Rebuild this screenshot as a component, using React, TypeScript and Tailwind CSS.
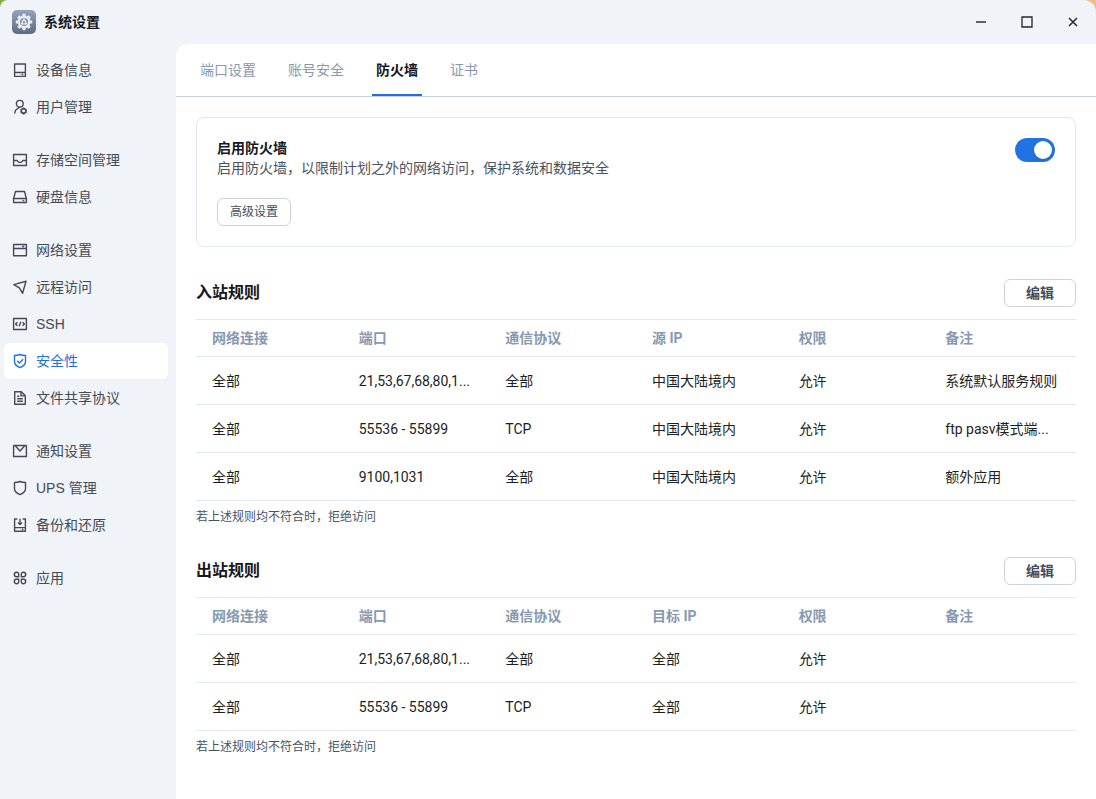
import {useState} from "react";
import type {ReactNode} from "react";
import clsx from "clsx";

type NavItem = {
  label: string;
  icon: ReactNode;
};

type Rule = string[];

const shield =
  "M8 1.5c2 .8 3.8 1 5.500 1v6.300c0 2.900-2.500 4.600-5.500 5.800-3-1.200-5.500-2.900-5.500-5.800V2.500c1.700 0 3.500-.2 5.500-1z";

const navGroups: NavItem[][] = [
  [
    {
      label: "设备信息",
      icon: (
        <>
          <path d="M2.6 2h10.8v12.4H2.6zM2.6 10.5h10.8" />
          <path d="M9.6 12.5h1.6" />
        </>
      ),
    },
    {
      label: "用户管理",
      icon: (
        <>
          <circle cx="7.8" cy="4.8" r="3.4" />
          <path d="M2.8 14.6c0-3 1.6-5 4.4-5.800" />
          <path d="M11.600 9.400l2.300 1.300v2.600l-2.300 1.300-2.300-1.300v-2.600z" strokeWidth="1.8" />
        </>
      ),
    },
  ],
  [
    {
      label: "存储空间管理",
      icon: <path d="M1.6 2.500h12.800v11H1.6zM1.6 8.500h3.600c.4 1.300 1.400 2 2.800 2s2.400-.7 2.800-2h3.600" />,
    },
    {
      label: "硬盘信息",
      icon: (
        <>
          <path d="M3.5 2.500h9l1.900 7v4H1.600v-4zM1.600 9.500h12.800" />
          <path d="M10.600 11.600h1.600" />
        </>
      ),
    },
  ],
  [
    {
      label: "网络设置",
      icon: <path d="M1.6 2.500h12.800v11.200H1.600zM1.600 6.500h12.800M10.200 4.500h2" />,
    },
    {label: "远程访问", icon: <path d="M1.8 5.600L14 2.300l-3.400 12-3.200-5.500z" />},
    {
      label: "SSH",
      icon: (
        <>
          <path d="M1.6 2.500h12.800v11H1.600z" />
          <path d="M5.400 6.200L3.600 8l1.800 1.800M10.600 6.200L12.400 8l-1.800 1.800M8.800 5.700l-1.600 4.600" />
        </>
      ),
    },
    {
      label: "安全性",
      icon: (
        <>
          <path d={shield} />
          <path d="M5.200 7.700l2.200 2.200 3.700-3.700" />
        </>
      ),
    },
    {
      label: "文件共享协议",
      icon: (
        <>
          <path d="M2.700 1.700h6.600l4 4v8.600H2.700z" />
          <path d="M9 1.900v4h4.100M5.200 6.200h2M5.200 8.700h5.600M5.200 11.300h5.600" />
        </>
      ),
    },
  ],
  [
    {label: "通知设置", icon: <path d="M1.600 2.500h12.800v11H1.600zM3.500 3l4.500 5 4.500-5" />},
    {label: "UPS 管理", icon: <path d={shield} />},
    {
      label: "备份和还原",
      icon: (
        <>
          <path d="M5.300 2H2.600v12.300h10.800V2h-2.700M2.600 10.600h10.800" />
          <path d="M8 1.800v5.600M5.900 5.600L8 7.600l2.100-2M9.800 12.500h1.600" />
        </>
      ),
    },
  ],
  [
    {
      label: "应用",
      icon: (
        <>
          <path d="M6.700 6.700H4.300a2.200 2.200 0 1 1 2.400-2.400z" />
          <path d="M9.300 6.700h2.400a2.200 2.200 0 1 0-2.400-2.400z" />
          <path d="M6.700 9.300H4.300a2.200 2.200 0 1 0 2.400 2.400z" />
          <path d="M9.300 9.300h2.400a2.200 2.200 0 1 1-2.400 2.400z" />
        </>
      ),
    },
  ],
];

const tabs = ["端口设置", "账号安全", "防火墙", "证书"];

const inboundRules: Rule[] = [
  ["全部", "21,53,67,68,80,1...", "全部", "中国大陆境内", "允许", "系统默认服务规则"],
  ["全部", "55536 - 55899", "TCP", "中国大陆境内", "允许", "ftp pasv模式端..."],
  ["全部", "9100,1031", "全部", "中国大陆境内", "允许", "额外应用"],
];

const outboundRules: Rule[] = [
  ["全部", "21,53,67,68,80,1...", "全部", "全部", "允许", ""],
  ["全部", "55536 - 55899", "TCP", "全部", "允许", ""],
];

const gearTeeth = [0, 45, 90, 135, 180, 225, 270, 315];

function AppLogo() {
  return (
    <svg viewBox="0 0 24 24" className="size-6" aria-hidden="true">
      <defs>
        <linearGradient id="logo-bg" x1="0" y1="0" x2="0" y2="1">
          <stop offset="0" stopColor="#93a5bd" />
          <stop offset="1" stopColor="#5f6b7d" />
        </linearGradient>
      </defs>
      <rect width="24" height="24" rx="5" fill="url(#logo-bg)" />
      <g fill="#e9edf2">
        {gearTeeth.map((angle) => (
          <rect key={angle} x="10.4" y="3.8" width="3.2" height="4" rx=".6" transform={`rotate(${angle} 12 12)`} />
        ))}
      </g>
      <circle cx="12" cy="12" r="5.2" fill="#8795a9" stroke="#e9edf2" strokeWidth="2.4" />
      <path d="M12 9l2.600 4.800H9.400z" fill="none" stroke="#e9edf2" strokeWidth="1.2" strokeLinejoin="round" />
    </svg>
  );
}

function TitleBar() {
  return (
    <header className="flex h-11 shrink-0 items-center justify-between pl-3">
      <div className="flex items-center gap-2">
        <AppLogo />
        <h1 className="text-sm font-bold text-[#15181e]">系统设置</h1>
      </div>
      <div className="flex text-[#22262d]">
        <button type="button" aria-label="最小化" className="grid h-11 w-[46px] place-items-center">
          <svg viewBox="0 0 12 12" className="size-3" fill="none" stroke="currentColor" strokeWidth="1.4">
            <path d="M1 6h10" />
          </svg>
        </button>
        <button type="button" aria-label="最大化" className="grid h-11 w-[46px] place-items-center">
          <svg viewBox="0 0 12 12" className="size-3" fill="none" stroke="currentColor" strokeWidth="1.3">
            <path d="M1 1h10v10H1z" />
          </svg>
        </button>
        <button type="button" aria-label="关闭" className="grid h-11 w-[46px] place-items-center">
          <svg viewBox="0 0 12 12" className="size-3" fill="none" stroke="currentColor" strokeWidth="1.5">
            <path d="M2 2l8 8M10 2l-8 8" />
          </svg>
        </button>
      </div>
    </header>
  );
}

function Sidebar() {
  return (
    <nav className="flex w-44 shrink-0 flex-col gap-4 pt-2 pr-2 pl-1">
      {navGroups.map((group) => (
        <ul key={group[0].label} className="flex flex-col gap-px pb-px">
          {group.map((item) => {
            const active = item.label === "安全性";
            return (
              <li key={item.label}>
                <a
                  href="#"
                  aria-current={active ? "page" : undefined}
                  className={clsx(
                    "flex h-9 items-center gap-2 rounded-md px-2 text-sm",
                    active ? "bg-white text-[#1f70df]" : "text-[#454b55]",
                  )}
                >
                  <svg
                    viewBox="0 0 16 16"
                    className="size-4 shrink-0"
                    fill="none"
                    stroke="currentColor"
                    strokeWidth="1.4"
                    strokeLinejoin="round"
                    aria-hidden="true"
                  >
                    {item.icon}
                  </svg>
                  {item.label}
                </a>
              </li>
            );
          })}
        </ul>
      ))}
    </nav>
  );
}

function FirewallCard() {
  const [enabled, setEnabled] = useState(true);

  return (
    <section className="flex items-start justify-between rounded-lg border border-[#e0e7f1] p-5">
      <div>
        <label htmlFor="firewall" className="block text-sm leading-5 font-bold text-[#15181e]">
          启用防火墙
        </label>
        <p className="text-sm leading-5 text-[#4b5260]">启用防火墙，以限制计划之外的网络访问，保护系统和数据安全</p>
        <button
          type="button"
          className="mt-5 block h-7 rounded-md border border-[#c9d4e2] px-3 text-xs text-[#454d5c]"
        >
          高级设置
        </button>
      </div>
      <input
        id="firewall"
        type="checkbox"
        role="switch"
        checked={enabled}
        onChange={(e) => setEnabled(e.target.checked)}
        className="h-6 w-10 shrink-0 appearance-none rounded-full bg-[#b9c4d3] p-[3px] before:block before:size-[18px] before:rounded-full before:bg-white before:shadow-sm checked:bg-[#2172e2] checked:before:translate-x-4"
      />
    </section>
  );
}

function RuleSection({title, ipLabel, rules}: {title: string; ipLabel: string; rules: Rule[]}) {
  const columns = ["网络连接", "端口", "通信协议", ipLabel, "权限", "备注"];

  return (
    <section className="mt-8">
      <div className="mb-3 flex items-center justify-between">
        <h2 className="text-base leading-7 font-bold text-[#15181e]">{title}</h2>
        <button
          type="button"
          className="h-7 w-18 rounded-md border border-[#c9d4e2] text-sm font-bold text-[#454d5c]"
        >
          编辑
        </button>
      </div>
      <table className="w-full table-fixed border-separate border-spacing-0 text-left text-sm">
        <thead>
          <tr>
            {columns.map((column) => (
              <th key={column} className="h-[38px] border-y border-[#e1e8ee] px-4 py-0 font-bold text-[#8799b0]">
                {column}
              </th>
            ))}
          </tr>
        </thead>
        <tbody>
          {rules.map((rule, i) => (
            <tr key={i}>
              {rule.map((cell, j) => (
                <td key={j} className="h-12 border-b border-[#e1e8ee] px-4 py-0 whitespace-nowrap text-[#1b1e24]">
                  {cell}
                </td>
              ))}
            </tr>
          ))}
        </tbody>
      </table>
      <p className="mt-2 text-xs leading-4 text-[#4b5260]">若上述规则均不符合时，拒绝访问</p>
    </section>
  );
}

export default function App() {
  const [tab, setTab] = useState("防火墙");

  return (
    <div className="min-h-screen bg-linear-to-r from-[#86b33c] to-[#ecbf85]">
      <div className="flex min-h-screen flex-col rounded-tl-lg rounded-tr-xl bg-[#f0f3f8] font-['Liberation_Sans','Noto_Sans_CJK_SC',sans-serif]">
        <TitleBar />
        <div className="flex grow">
          <Sidebar />
          <main className="min-w-0 grow rounded-tl-xl bg-white font-[Roboto,'Noto_Sans_CJK_SC',sans-serif]">
            <div role="tablist" className="flex gap-6 border-b border-[#c9d4e2] px-5">
              {tabs.map((name) => (
                <button
                  key={name}
                  type="button"
                  role="tab"
                  aria-selected={tab === name}
                  onClick={() => setTab(name)}
                  className={clsx(
                    "h-[52px] border-y-2 border-t-transparent px-1 text-sm",
                    tab === name
                      ? "border-b-[#1f70df] font-bold text-[#15181e]"
                      : "border-b-transparent text-[#8799b0]",
                  )}
                >
                  {name}
                </button>
              ))}
            </div>
            <div className="p-5">
              <FirewallCard />
              <RuleSection title="入站规则" ipLabel="源 IP" rules={inboundRules} />
              <RuleSection title="出站规则" ipLabel="目标 IP" rules={outboundRules} />
            </div>
          </main>
        </div>
      </div>
    </div>
  );
}
